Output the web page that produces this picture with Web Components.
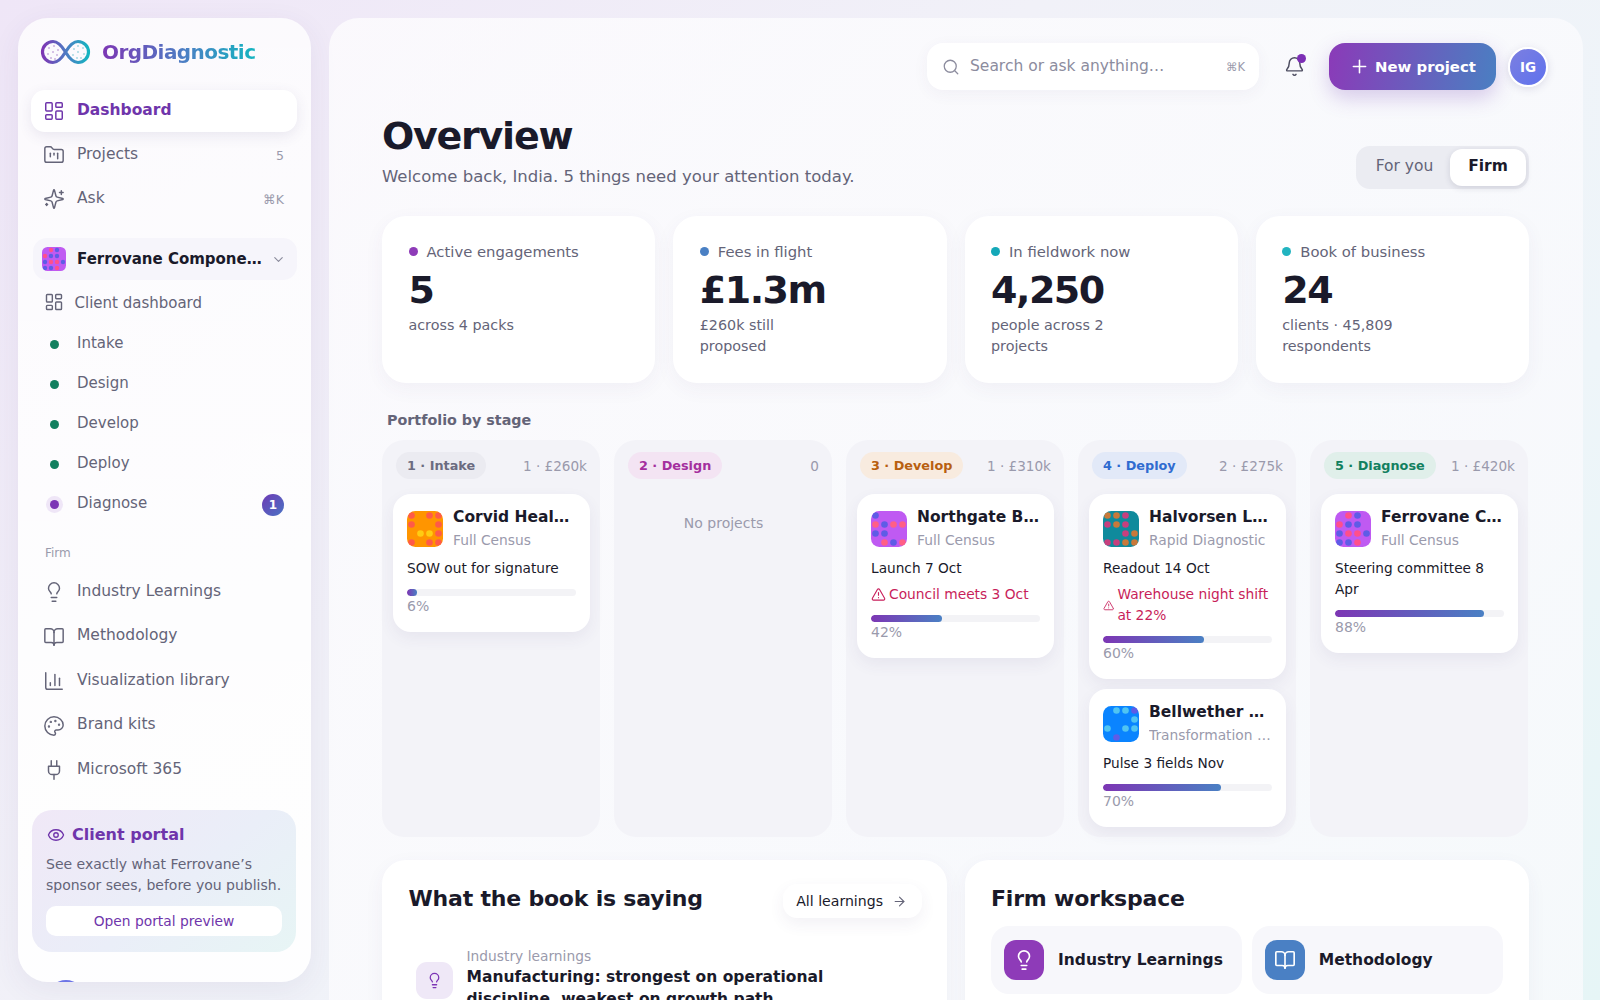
<!DOCTYPE html>
<html lang="en">
<head>
<meta charset="utf-8">
<title>OrgDiagnostic</title>
<style>
  html, body { margin: 0; height: 1000px; overflow: hidden; }
  body {
    font-family: "DejaVu Sans", sans-serif;
    color: #1a1a2a;
    background: linear-gradient(135deg, #efe6f7 0%, #f1f1f8 40%, #eef5f9 75%, #e6f5f6 100%);
  }
</style>
</head>
<body>
<od-app>
  <od-sidebar slot="side">
    <od-nav icon="dashboard" active>Dashboard</od-nav>
    <od-nav icon="projects" meta="5">Projects</od-nav>
    <od-nav icon="ask" meta="⌘K">Ask</od-nav>
  </od-sidebar>

  <od-main slot="main">
    <od-stat slot="stats" dot="#8e3bb8" label="Active engagements" value="5">across 4 packs</od-stat>
    <od-stat slot="stats" dot="#4a80c4" label="Fees in flight" value="£1.3m">£260k still proposed</od-stat>
    <od-stat slot="stats" dot="#14a8b8" label="In fieldwork now" value="4,250">people across 2 projects</od-stat>
    <od-stat slot="stats" dot="#22b4c0" label="Book of business" value="24">clients · 45,809 respondents</od-stat>

    <od-stage slot="stages" label="1 · Intake" meta="1 · £260k" fg="#6b6b80" bg="#ebebf1">
      <od-project name="Corvid Healthcare" pack="Full Census" note="SOW out for signature" pct="6" logo="corvid"></od-project>
    </od-stage>
    <od-stage slot="stages" label="2 · Design" meta="0" fg="#a42f9e" bg="#f3e4f3" empty></od-stage>
    <od-stage slot="stages" label="3 · Develop" meta="1 · £310k" fg="#b85f10" bg="#f8ebdf">
      <od-project name="Northgate Borough" pack="Full Census" note="Launch 7 Oct" risk="Council meets 3 Oct" pct="42" logo="northgate"></od-project>
    </od-stage>
    <od-stage slot="stages" label="4 · Deploy" meta="2 · £275k" fg="#2f6bd0" bg="#e2e9f8">
      <od-project name="Halvorsen Logistics" pack="Rapid Diagnostic" note="Readout 14 Oct" risk="Warehouse night shift at 22%" pct="60" logo="halvorsen"></od-project>
      <od-project name="Bellwether Mutual" pack="Transformation Pack" note="Pulse 3 fields Nov" pct="70" logo="bellwether"></od-project>
    </od-stage>
    <od-stage slot="stages" label="5 · Diagnose" meta="1 · £420k" fg="#12805f" bg="#e0efea">
      <od-project name="Ferrovane Components" pack="Full Census" note="Steering committee 8 Apr" pct="88" logo="ferrovane"></od-project>
    </od-stage>

    <od-panel slot="panels" heading="What the book is saying" link="All learnings">
      <od-learning kicker="Industry learnings">Manufacturing: strongest on operational discipline, weakest on growth path</od-learning>
    </od-panel>
    <od-panel slot="panels" heading="Firm workspace">
      <od-tiles>
        <od-tile icon="bulb" color="#8e3bb8">Industry Learnings</od-tile>
        <od-tile icon="book" color="#4a80c4">Methodology</od-tile>
      </od-tiles>
    </od-panel>
  </od-main>
</od-app>

<script>
const iconPaths = {
  dashboard: '<rect width="7" height="9" x="3" y="3" rx="1"/><rect width="7" height="5" x="14" y="3" rx="1"/><rect width="7" height="9" x="14" y="12" rx="1"/><rect width="7" height="5" x="3" y="16" rx="1"/>',
  projects: '<path d="M4 20h16a2 2 0 0 0 2-2V8a2 2 0 0 0-2-2h-7.93a2 2 0 0 1-1.66-.9l-.82-1.2A2 2 0 0 0 7.93 3H4a2 2 0 0 0-2 2v13c0 1.1.9 2 2 2Z"/><path d="M8 10v4"/><path d="M12 10v2"/><path d="M16 10v6"/>',
  ask: '<path d="M9.937 15.5A2 2 0 0 0 8.5 14.063l-6.135-1.582a.5.5 0 0 1 0-.962L8.5 9.936A2 2 0 0 0 9.937 8.5l1.582-6.135a.5.5 0 0 1 .963 0L14.063 8.5A2 2 0 0 0 15.5 9.937l6.135 1.581a.5.5 0 0 1 0 .964L15.5 14.063a2 2 0 0 0-1.437 1.437l-1.582 6.135a.5.5 0 0 1-.963 0z"/><path d="M20 3v4"/><path d="M22 5h-4"/><path d="M4 17v2"/><path d="M5 18H3"/>',
  bulb: '<path d="M15 14c.2-1 .7-1.7 1.5-2.5 1-.9 1.5-2.2 1.5-3.5A6 6 0 0 0 6 8c0 1 .2 2.2 1.5 3.5.7.7 1.3 1.5 1.5 2.5"/><path d="M9 18h6"/><path d="M10 22h4"/>',
  book: '<path d="M12 7v14"/><path d="M3 18a1 1 0 0 1-1-1V4a1 1 0 0 1 1-1h5a4 4 0 0 1 4 4 4 4 0 0 1 4-4h5a1 1 0 0 1 1 1v13a1 1 0 0 1-1 1h-6a3 3 0 0 0-3 3 3 3 0 0 0-3-3z"/>',
  chart: '<path d="M3 3v16a2 2 0 0 0 2 2h16"/><path d="M18 17V9"/><path d="M13 17V5"/><path d="M8 17v-3"/>',
  palette: '<circle cx="13.5" cy="6.5" r=".5" fill="currentColor"/><circle cx="17.5" cy="10.5" r=".5" fill="currentColor"/><circle cx="8.5" cy="7.5" r=".5" fill="currentColor"/><circle cx="6.5" cy="12.5" r=".5" fill="currentColor"/><path d="M12 2C6.5 2 2 6.5 2 12s4.5 10 10 10c.926 0 1.648-.746 1.648-1.688 0-.437-.18-.835-.437-1.125-.29-.289-.438-.652-.438-1.125a1.64 1.64 0 0 1 1.668-1.668h1.996c3.051 0 5.555-2.503 5.555-5.554C21.965 6.012 17.461 2 12 2z"/>',
  plug: '<path d="M12 22v-5"/><path d="M9 8V2"/><path d="M15 8V2"/><path d="M18 8v5a4 4 0 0 1-4 4h-4a4 4 0 0 1-4-4V8Z"/>',
  eye: '<path d="M2.062 12.348a1 1 0 0 1 0-.696 10.75 10.75 0 0 1 19.876 0 1 1 0 0 1 0 .696 10.75 10.75 0 0 1-19.876 0"/><circle cx="12" cy="12" r="3"/>',
  bell: '<path d="M10.268 21a2 2 0 0 0 3.464 0"/><path d="M3.262 15.326A1 1 0 0 0 4 17h16a1 1 0 0 0 .74-1.673C19.41 13.956 18 12.499 18 8A6 6 0 0 0 6 8c0 4.499-1.411 5.956-2.738 7.326"/>',
  search: '<path d="m21 21-4.34-4.34"/><circle cx="11" cy="11" r="8"/>',
  plus: '<path d="M5 12h14"/><path d="M12 5v14"/>',
  arrow: '<path d="M5 12h14"/><path d="m12 5 7 7-7 7"/>',
  alert: '<path d="m21.73 18-8-14a2 2 0 0 0-3.48 0l-8 14A2 2 0 0 0 4 21h16a2 2 0 0 0 1.73-3"/><path d="M12 9v4"/><path d="M12 17h.01"/>',
  chevron: '<path d="m6 9 6 6 6-6"/>'
};

function icon(name, size, stroke) {
  return `<svg width="${size}" height="${size}" viewBox="0 0 24 24" fill="none" stroke="currentColor" stroke-width="${stroke || 2}" stroke-linecap="round" stroke-linejoin="round" style="display:block;flex:none">${iconPaths[name]}</svg>`;
}

// client logos: 4x4 dot grid, each row is a string of colour keys
const logos = {
  corvid: { bg: "#ff9500", a: "#ff5a48", b: "#ffcc12", rows: ["a.aa", "a..a", ".bba", "a.aa"] },
  northgate: { bg: "#bf5af2", a: "#ff5f86", b: "#5e5ce6", rows: ["b...", "abaa", "bb..", ".aba"] },
  halvorsen: { bg: "#0f8a9c", a: "#c9793a", b: "#c63f7e", rows: ["aab.", "bab.", "..ba", "bbaa"] },
  bellwether: { bg: "#0a84ff", a: "#50c4f2", b: "#5e5ce6", rows: [".aab", "...a", "a.aa", ".b.."] },
  ferrovane: { bg: "#bf5af2", a: "#ff4f8b", b: "#5e5ce6", rows: [".ab.", "abb.", "baab", "bba."] }
};

function logoSvg(name, size) {
  const l = logos[name];
  let dots = "";
  l.rows.forEach((row, y) => {
    [...row].forEach((c, x) => {
      if (c !== ".") dots += `<circle cx="${4.5 + x * 9}" cy="${4.5 + y * 9}" r="3.3" fill="${l[c]}"/>`;
    });
  });
  return `<svg width="${size}" height="${size}" viewBox="0 0 36 36" style="display:block;flex:none;border-radius:${size * 0.23}px"><rect width="36" height="36" fill="${l.bg}"/>${dots}</svg>`;
}

class OdElement extends HTMLElement {
  constructor() {
    super();
    this.attachShadow({ mode: "open" });
  }
  attr(name, fallback) {
    return this.hasAttribute(name) ? this.getAttribute(name) : fallback;
  }
  connectedCallback() {
    this.shadowRoot.innerHTML = this.render();
  }
}

class OdApp extends OdElement {
  render() {
    return `<style>
      :host { display: grid; grid-template-columns: 293px 1254px; gap: 18px; padding: 18px 17px 0 18px; align-items: start; }
    </style>
    <slot name="side"></slot><slot name="main"></slot>`;
  }
}

class OdNav extends OdElement {
  render() {
    const meta = this.attr("meta", "");
    return `<style>
      :host { display: flex; align-items: center; height: 42px; margin: 0 14px 2px 13px; padding: 0 13px 0 12px; gap: 12px;
        border-radius: 14px; font-size: 15.5px; color: #646478; box-sizing: border-box; }
      :host([active]) { background: #fff; color: #6f35ab; font-weight: 700; box-shadow: 0 4px 14px rgba(70, 60, 120, .1); }
      .text { flex: 1; white-space: nowrap; margin-bottom: 3px; }
      .meta { font-size: 12.5px; color: #9a9aac; font-weight: 400; }
    </style>
    ${icon(this.attr("icon"), 22, 1.6)}
    <span class="text"><slot></slot></span>
    ${meta ? `<span class="meta">${meta}</span>` : ""}`;
  }
}

class OdStep extends OdElement {
  render() {
    const badge = this.attr("badge", "");
    return `<style>
      :host { display: flex; align-items: center; height: 40px; padding: 0 27px 0 32px; font-size: 15px; color: #646478; }
      .dot { width: 9px; height: 9px; border-radius: 50%; background: #12805f; margin-right: 18px; flex: none; margin-top: 3px; }
      :host([current]) .dot { background: #7c35b5; box-shadow: 0 0 0 4px #efe6f7; }
      .text { flex: 1; }
      .badge { width: 22px; height: 22px; border-radius: 50%; color: #fff; font-size: 12px; font-weight: 700;
        display: flex; align-items: center; justify-content: center; margin-top: 3px;
        background: linear-gradient(135deg, #6e3ab5, #4a74c4); }
    </style>
    <span class="dot"></span><span class="text"><slot></slot></span>
    ${badge ? `<span class="badge">${badge}</span>` : ""}`;
  }
}

class OdSidebar extends OdElement {
  render() {
    const steps = ["Intake", "Design", "Develop", "Deploy"].map(s => `<od-step>${s}</od-step>`).join("");
    const firm = [["bulb", "Industry Learnings"], ["book", "Methodology"], ["chart", "Visualization library"], ["palette", "Brand kits"], ["plug", "Microsoft 365"]]
      .map(f => `<od-nav icon="${f[0]}" style="height:42.5px">${f[1]}</od-nav>`).join("");
    return `<style>
      :host { display: block; height: 964px; overflow: hidden; box-sizing: border-box; border-radius: 30px; padding-top: 20px;
        background: linear-gradient(180deg, rgba(255,255,255,.78), rgba(255,255,255,.95));
        box-shadow: 0 8px 30px rgba(70, 60, 120, .07); }
      .brand { display: flex; align-items: center; gap: 11px; height: 28px; padding: 0 0 0 22px; margin-bottom: 24px; }
      .name { font-size: 20px; letter-spacing: -.55px; font-weight: 700; background: linear-gradient(90deg, #7d36b4, #4a80c4 55%, #14b4c0);
        -webkit-background-clip: text; background-clip: text; color: transparent; }
      .client { display: flex; align-items: center; gap: 11px; height: 42px; margin: 18px 14px 0 15px; padding: 0 11px 0 9px;
        background: #f6f5fb; border-radius: 14px; font-size: 15px; font-weight: 700; color: #1a1a2a; box-sizing: border-box; }
      .client span { flex: 1; white-space: nowrap; overflow: hidden; text-overflow: ellipsis; margin-right: -2px; }
      .client svg:last-child { color: #8a8a9c; }
      .sub { display: flex; align-items: center; gap: 11px; height: 43px; padding: 0 0 0 25.5px; font-size: 15px; color: #646478; }
      .label { font-size: 12px; color: #9a9aac; padding: 0 0 0 27px; margin: 23px 0 10px; line-height: 15px; }
      .portal { margin: 18px 15px 0 14px; height: 142px; box-sizing: border-box; padding: 15.5px 14px 0; border-radius: 20px;
        background: linear-gradient(140deg, #f0e8f7, #eaeef8 55%, #e7f5f5); }
      .portal h4 { display: flex; align-items: center; gap: 7px; margin: 0; font-size: 16px; font-weight: 700; color: #6f35ab; line-height: 20px; }
      .portal h4 svg { margin-left: 1px; }
      .portal p { margin: 8.5px 0 0; font-size: 14px; line-height: 21px; color: #646478; white-space: nowrap; }
      .portal a { display: block; margin-top: 10px; height: 30px; line-height: 30px; text-align: center; background: #fff; border-radius: 10px;
        font-size: 13.8px; color: #6f35ab; }
      .user { display: flex; align-items: flex-start; gap: 12px; margin: 28px 0 0 29px; font-size: 14px; font-weight: 700; color: #646478; }
      .user i { width: 38px; height: 38px; border-radius: 50%; background: #6c74e6; flex: none; }
      .user span { margin-top: -1px; line-height: 20px; }
    </style>
    <div class="brand">
      <svg width="51" height="28" viewBox="0 0 51 28" style="flex:none">
        <defs><linearGradient id="inf" x1="0" x2="1" y1="0" y2="0"><stop offset="0" stop-color="#7d36b4"/><stop offset=".55" stop-color="#4a80c4"/><stop offset="1" stop-color="#14b4c0"/></linearGradient></defs>
        <path d="M25.5 14C21 6.5 17.5 3.5 13 3.500A10.500 10.500 0 0 0 13 24.500C17.500 24.500 21 21.500 25.500 14C30 6.500 33.500 3.500 38 3.500A10.500 10.500 0 0 1 38 24.500C33.500 24.500 30 21.500 25.500 14Z" fill="#fbf9fd" stroke="url(#inf)" stroke-width="3.200"/>
        <g fill="#a77bc8"><circle cx="9" cy="10" r=".8"/><circle cx="14" cy="8" r=".8"/><circle cx="18" cy="12" r=".8"/><circle cx="8" cy="16" r=".8"/><circle cx="13" cy="14" r=".8"/><circle cx="11" cy="20" r=".8"/><circle cx="17" cy="17" r=".8"/><circle cx="15" cy="21" r=".8"/></g>
        <g fill="#6cc0d0"><circle cx="34" cy="11" r=".8"/><circle cx="38" cy="8" r=".8"/><circle cx="43" cy="10" r=".8"/><circle cx="33" cy="17" r=".8"/><circle cx="38" cy="14" r=".8"/><circle cx="44" cy="16" r=".8"/><circle cx="37" cy="20" r=".8"/><circle cx="41" cy="20" r=".8"/></g>
      </svg>
      <span class="name">OrgDiagnostic</span>
    </div>
    <slot></slot>
    <div class="client">${logoSvg("ferrovane", 24)}<span>Ferrovane Components</span>${icon("chevron", 15, 1.8)}</div>
    <div class="sub">${icon("dashboard", 20, 1.7)}<span style="margin-top:2px">Client dashboard</span></div>
    <div class="steps">${steps}<od-step current badge="1">Diagnose</od-step></div>
    <div class="label">Firm</div>
    ${firm}
    <div class="portal">
      <h4>${icon("eye", 18, 1.8)}Client portal</h4>
      <p>See exactly what Ferrovane’s<br>sponsor sees, before you publish.</p>
      <a>Open portal preview</a>
    </div>
    <div class="user"><i></i><span>India Gill</span></div>`;
  }
}

class OdMain extends OdElement {
  render() {
    return `<style>
      :host { display: block; height: 1300px; box-sizing: border-box; padding: 25px 54px 0 53px; border-radius: 30px 30px 0 0;
        background: linear-gradient(135deg, rgba(255,255,255,.7), rgba(250,250,253,.8) 60%, rgba(248,250,252,.85)); }
      .top { display: flex; align-items: center; justify-content: flex-end; margin-right: -19px; height: 47px; }
      .search { display: flex; align-items: center; width: 332px; height: 47px; box-sizing: border-box; padding: 0 14px 0 15px; gap: 10px;
        background: #fff; border-radius: 16px; color: #8c8c9e; font-size: 15.5px; box-shadow: 0 4px 16px rgba(70,60,120,.05); }
      .search span { flex: 1; margin-bottom: 2px; }
      .search small { font-size: 11.5px; color: #9a9aac; }
      .bell { position: relative; margin: 0 24px 0 25px; color: #4c4c60; }
      .bell i { position: absolute; top: -2px; right: -1px; width: 9px; height: 9px; border-radius: 50%; background: #7c2fb5; }
      .new { display: flex; align-items: center; gap: 5px; width: 167px; height: 47px; box-sizing: border-box; padding-left: 20px; border-radius: 16px;
        font-size: 14.9px; font-weight: 700; color: #fff; background: linear-gradient(100deg, #8b3ab8, #4a7fc2);
        box-shadow: 0 8px 20px rgba(110, 60, 180, .25); }
      .avatar { width: 40px; height: 40px; margin-left: 12px; box-sizing: border-box; border: 2px solid #fff; border-radius: 50%;
        display: flex; align-items: center; justify-content: center; font-size: 13.5px; font-weight: 700; color: #fff;
        background: linear-gradient(135deg, #7c7fe0, #5f72ee); box-shadow: 0 2px 8px rgba(70,60,120,.15); }
      .head { display: flex; align-items: flex-end; justify-content: space-between; margin-top: 22px; }
      h1 { margin: 0; font-size: 38px; letter-spacing: -1.25px; line-height: 48px; font-weight: 700; color: #1a1a2a; }
      .head p { margin: 5px 0 0; font-size: 16.500px; line-height: 24px; color: #646478; }
      .toggle { display: flex; padding: 3px; height: 43px; box-sizing: border-box; width: 173px; background: #ebecf2; border-radius: 14px; font-size: 15.5px; color: #646478; margin-bottom: 0; }
      .toggle span { display: flex; align-items: center; justify-content: center; padding-bottom: 3px; box-sizing: border-box; }
      .toggle span:first-child { width: 91px; }
      .toggle span:last-child { flex: 1; background: #fff; color: #1a1a2a; font-weight: 700; border-radius: 12px; box-shadow: 0 2px 6px rgba(40,40,80,.14); }
      .stats { display: grid; grid-template-columns: repeat(4, 1fr); gap: 18px; margin-top: 27px; }
      h2 { margin: 27px 0 0 5px; font-size: 14.3px; line-height: 20px; font-weight: 700; color: #646478; }
      .stages { display: grid; grid-template-columns: repeat(5, 218px); gap: 14px; margin-top: 10px; }
      .panels { display: grid; grid-template-columns: 1fr 1fr; gap: 18px; margin-top: 23px; }
    </style>
    <div class="top">
      <div class="search">${icon("search", 18, 1.7)}<span>Search or ask anything…</span><small>⌘K</small></div>
      <div class="bell">${icon("bell", 21, 1.7)}<i></i></div>
      <div class="new">${icon("plus", 21, 1.8)}New project</div>
      <div class="avatar">IG</div>
    </div>
    <div class="head">
      <div><h1>Overview</h1><p>Welcome back, India. 5 things need your attention today.</p></div>
      <div class="toggle"><span>For you</span><span>Firm</span></div>
    </div>
    <div class="stats"><slot name="stats"></slot></div>
    <h2>Portfolio by stage</h2>
    <div class="stages"><slot name="stages"></slot></div>
    <div class="panels"><slot name="panels"></slot></div>`;
  }
}

class OdStat extends OdElement {
  render() {
    return `<style>
      :host { display: block; height: 167px; box-sizing: border-box; padding: 25px 26.5px; background: #fff; border-radius: 24px;
        box-shadow: 0 6px 20px rgba(70,60,120,.05); }
      .label { display: flex; align-items: center; gap: 9px; font-size: 14.8px; line-height: 21px; color: #646478; }
      .label i { width: 9px; height: 9px; border-radius: 50%; background: ${this.attr("dot")}; }
      .value { font-size: 38px; letter-spacing: -1.5px; line-height: 46px; font-weight: 700; color: #1a1a2a; margin-top: 5px; }
      .sub { font-size: 14.3px; line-height: 21px; color: #646478; margin-top: 2px; max-width: 130px; }
    </style>
    <div class="label"><i></i>${this.attr("label")}</div>
    <div class="value">${this.attr("value")}</div>
    <div class="sub"><slot></slot></div>`;
  }
}

class OdStage extends OdElement {
  render() {
    return `<style>
      :host { display: block; box-sizing: border-box; height: 397px; padding: 12px 10px 10px 11px; border-radius: 22px; background: #f3f3f8; }
      .head { display: flex; align-items: center; justify-content: space-between; padding: 0 3px 0 3px; height: 27px; margin-bottom: 15px; }
      .pill { padding: 0 11px; line-height: 27px; border-radius: 14px; font-size: 12.8px; font-weight: 700; color: ${this.attr("fg")}; background: ${this.attr("bg")}; }
      .meta { font-size: 13.6px; color: #9a9aac; }
      .cards { display: flex; flex-direction: column; gap: 10px; }
      .empty { text-align: center; font-size: 14px; color: #9a9aac; margin-top: 19px; line-height: 20px; }
    </style>
    <div class="head"><span class="pill">${this.attr("label")}</span><span class="meta">${this.attr("meta")}</span></div>
    <div class="cards"><slot></slot></div>
    ${this.hasAttribute("empty") ? `<div class="empty">No projects</div>` : ""}`;
  }
}

class OdProject extends OdElement {
  render() {
    const risk = this.attr("risk", "");
    const pct = this.attr("pct");
    return `<style>
      :host { display: block; box-sizing: border-box; padding: 12px 14px 16px; background: #fff; border-radius: 18px; box-shadow: 0 6px 16px rgba(70,60,120,.07); }
      .top { display: flex; align-items: center; gap: 10px; }
      .who { min-width: 0; flex: 1; }
      .name { font-size: 15.5px; line-height: 23px; font-weight: 700; color: #1a1a2a; white-space: nowrap; overflow: hidden; text-overflow: ellipsis; }
      .pack { font-size: 13.8px; line-height: 21px; margin-top: 1px; color: #9a9aac; white-space: nowrap; overflow: hidden; text-overflow: ellipsis; }
      .note { font-size: 13.7px; line-height: 21px; color: #1a1a2a; margin-top: 7px; }
      .risk { display: flex; align-items: center; gap: 3px; font-size: 13.8px; line-height: 21px; color: #c81e5a; margin-top: 5px; }
      .risk svg { flex: 0 1 auto !important; min-width: 0; }
      .bar { height: 7px; border-radius: 4px; background: #f3f3f6; margin-top: 10px; overflow: hidden; }
      .bar i { display: block; height: 100%; width: ${pct}%; border-radius: 4px; min-width: 10px; background: linear-gradient(90deg, #7d36b4, #4a80c4); }
      .pct { font-size: 14px; line-height: 20px; color: #9a9aac; }
    </style>
    <div class="top">${logoSvg(this.attr("logo"), 36)}<div class="who"><div class="name">${this.attr("name")}</div><div class="pack">${this.attr("pack")}</div></div></div>
    <div class="note">${this.attr("note")}</div>
    ${risk ? `<div class="risk">${icon("alert", 15, 1.8)}<span>${risk}</span></div>` : ""}
    <div class="bar"><i></i></div>
    <div class="pct">${pct}%</div>`;
  }
}

class OdPanel extends OdElement {
  render() {
    const link = this.attr("link", "");
    return `<style>
      :host { display: block; box-sizing: border-box; height: 300px; padding: 24px 26.5px; background: #fff; border-radius: 24px; box-shadow: 0 6px 20px rgba(70,60,120,.05); }
      .head { display: flex; align-items: flex-start; justify-content: space-between; height: 42px; }
      h3 { margin: 0; font-size: 22px; letter-spacing: -.2px; line-height: 30px; font-weight: 700; color: #1a1a2a; }
      a { display: flex; align-items: center; gap: 9px; height: 34px; margin: 0 -2px 0 0; padding: 0 15px 0 13px; border-radius: 14px; background: #fff;
        font-size: 14.1px; color: #1a1a2a; box-shadow: 0 6px 16px rgba(70,60,120,.07); }
      a svg { color: #646478; }
    </style>
    <div class="head"><h3>${this.attr("heading")}</h3>${link ? `<a>${link}${icon("arrow", 15, 1.7)}</a>` : ""}</div>
    <slot></slot>`;
  }
}

class OdLearning extends OdElement {
  render() {
    return `<style>
      :host { display: flex; align-items: center; gap: 14px; padding: 20px 7px; }
      .ico { width: 37px; height: 37px; margin-top: 4px; border-radius: 11px; background: #efe8f7; color: #7c35b5; display: flex; align-items: center; justify-content: center; flex: none; }
      .kick { font-size: 13.8px; line-height: 20px; color: #9a9aac; }
      .text { font-size: 15.5px; line-height: 22px; font-weight: 700; color: #1a1a2a; }
    </style>
    <div class="ico">${icon("bulb", 17, 1.8)}</div>
    <div><div class="kick">${this.attr("kicker")}</div><div class="text"><slot></slot></div></div>`;
  }
}

class OdTiles extends OdElement {
  render() {
    return `<style>
      :host { display: grid; grid-template-columns: 1fr 1fr; gap: 10px; margin-top: 0; }
    </style><slot></slot>`;
  }
}

class OdTile extends OdElement {
  render() {
    return `<style>
      :host { display: flex; align-items: center; gap: 14px; height: 68px; box-sizing: border-box; padding: 0 13px; border-radius: 18px; background: #f7f7fb;
        font-size: 15.5px; font-weight: 700; color: #1a1a2a; white-space: nowrap; }
      .ico { width: 40px; height: 40px; border-radius: 12px; background: ${this.attr("color")}; color: #fff; display: flex; align-items: center; justify-content: center; flex: none; }
    </style>
    <div class="ico">${icon(this.attr("icon"), 22, 1.8)}</div><slot></slot>`;
  }
}

customElements.define("od-app", OdApp);
customElements.define("od-nav", OdNav);
customElements.define("od-step", OdStep);
customElements.define("od-sidebar", OdSidebar);
customElements.define("od-main", OdMain);
customElements.define("od-stat", OdStat);
customElements.define("od-stage", OdStage);
customElements.define("od-project", OdProject);
customElements.define("od-panel", OdPanel);
customElements.define("od-learning", OdLearning);
customElements.define("od-tiles", OdTiles);
customElements.define("od-tile", OdTile);
</script>
</body>
</html>
